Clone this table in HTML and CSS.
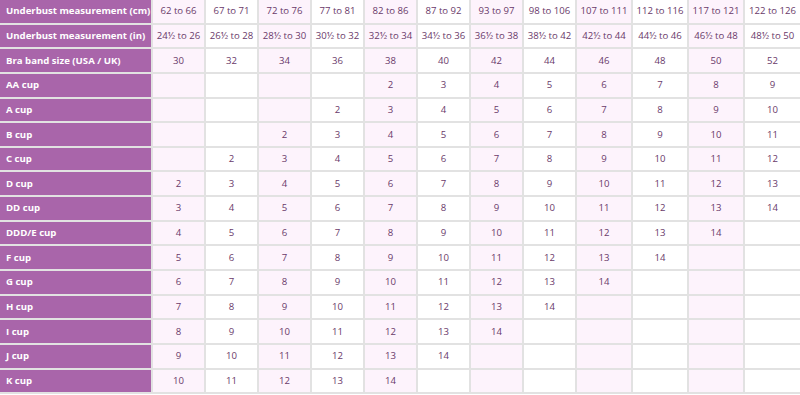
FILE: index.html
```html
<!DOCTYPE html>
<html lang="en">
<head>
    <meta charset="UTF-8">
    <meta name="viewport" content="width=device-width, initial-scale=1.0">
    <title>Bra Size Chart</title>
    <link rel="stylesheet" href="styles.css">
</head>
<body>
    <table class="size-chart">
        <colgroup>
            <col class="col-label">
            <col class="col-n"><col class="col-n"><col class="col-n"><col class="col-n">
            <col class="col-n"><col class="col-n"><col class="col-n"><col class="col-n">
            <col class="col-w"><col class="col-w"><col class="col-w"><col class="col-w">
        </colgroup>
        <tbody>
            <tr><th>Underbust measurement (cm)</th><td>62 to 66</td><td>67 to 71</td><td>72 to 76</td><td>77 to 81</td><td>82 to 86</td><td>87 to 92</td><td>93 to 97</td><td>98 to 106</td><td>107 to 111</td><td>112 to 116</td><td>117 to 121</td><td>122 to 126</td></tr>
            <tr><th>Underbust measurement (in)</th><td>24½ to 26</td><td>26½ to 28</td><td>28½ to 30</td><td>30½ to 32</td><td>32½ to 34</td><td>34½ to 36</td><td>36½ to 38</td><td>38½ to 42</td><td>42½ to 44</td><td>44½ to 46</td><td>46½ to 48</td><td>48½ to 50</td></tr>
            <tr><th>Bra band size (USA / UK)</th><td>30</td><td>32</td><td>34</td><td>36</td><td>38</td><td>40</td><td>42</td><td>44</td><td>46</td><td>48</td><td>50</td><td>52</td></tr>
            <tr><th>AA cup</th><td></td><td></td><td></td><td></td><td>2</td><td>3</td><td>4</td><td>5</td><td>6</td><td>7</td><td>8</td><td>9</td></tr>
            <tr><th>A cup</th><td></td><td></td><td></td><td>2</td><td>3</td><td>4</td><td>5</td><td>6</td><td>7</td><td>8</td><td>9</td><td>10</td></tr>
            <tr><th>B cup</th><td></td><td></td><td>2</td><td>3</td><td>4</td><td>5</td><td>6</td><td>7</td><td>8</td><td>9</td><td>10</td><td>11</td></tr>
            <tr><th>C cup</th><td></td><td>2</td><td>3</td><td>4</td><td>5</td><td>6</td><td>7</td><td>8</td><td>9</td><td>10</td><td>11</td><td>12</td></tr>
            <tr><th>D cup</th><td>2</td><td>3</td><td>4</td><td>5</td><td>6</td><td>7</td><td>8</td><td>9</td><td>10</td><td>11</td><td>12</td><td>13</td></tr>
            <tr><th>DD cup</th><td>3</td><td>4</td><td>5</td><td>6</td><td>7</td><td>8</td><td>9</td><td>10</td><td>11</td><td>12</td><td>13</td><td>14</td></tr>
            <tr><th>DDD/E cup</th><td>4</td><td>5</td><td>6</td><td>7</td><td>8</td><td>9</td><td>10</td><td>11</td><td>12</td><td>13</td><td>14</td><td></td></tr>
            <tr><th>F cup</th><td>5</td><td>6</td><td>7</td><td>8</td><td>9</td><td>10</td><td>11</td><td>12</td><td>13</td><td>14</td><td></td><td></td></tr>
            <tr><th>G cup</th><td>6</td><td>7</td><td>8</td><td>9</td><td>10</td><td>11</td><td>12</td><td>13</td><td>14</td><td></td><td></td><td></td></tr>
            <tr><th>H cup</th><td>7</td><td>8</td><td>9</td><td>10</td><td>11</td><td>12</td><td>13</td><td>14</td><td></td><td></td><td></td><td></td></tr>
            <tr><th>I cup</th><td>8</td><td>9</td><td>10</td><td>11</td><td>12</td><td>13</td><td>14</td><td></td><td></td><td></td><td></td><td></td></tr>
            <tr><th>J cup</th><td>9</td><td>10</td><td>11</td><td>12</td><td>13</td><td>14</td><td></td><td></td><td></td><td></td><td></td><td></td></tr>
            <tr><th>K cup</th><td>10</td><td>11</td><td>12</td><td>13</td><td>14</td><td></td><td></td><td></td><td></td><td></td><td></td><td></td></tr>
        </tbody>
    </table>
</body>
</html>
```

FILE: styles.css
```css
body {
    margin: 0;
    background-color: #ffffff;
    font-family: "Open Sans", Arial, sans-serif;
}

.size-chart {
    width: 800px;
    table-layout: fixed;
    border-collapse: collapse;
    /* outer edges are cut off, only the bottom line shows */
    border-style: hidden hidden solid hidden;
    border-bottom: 2px solid #e2e2e2;
}

.col-label { width: 152px; }
.col-n { width: 53px; }
.col-w { width: 56px; }

.size-chart th,
.size-chart td {
    height: 22.65px;
    padding: 0;
    border: 2px solid #e2e2e2;
    font-size: 9.6px;
    line-height: 12px;
    white-space: nowrap;
}

/* Row titles down the left side */
.size-chart th {
    background-color: #a965aa;
    color: #ffffff;
    font-weight: bold;
    text-align: left;
    padding-left: 6px;
}

.size-chart td {
    text-align: center;
    color: #6a3a6a;
    background-color: #ffffff;
}

/* every other size column is tinted pink */
.size-chart td:nth-child(even) {
    background-color: #fdf3fc;
}
```
